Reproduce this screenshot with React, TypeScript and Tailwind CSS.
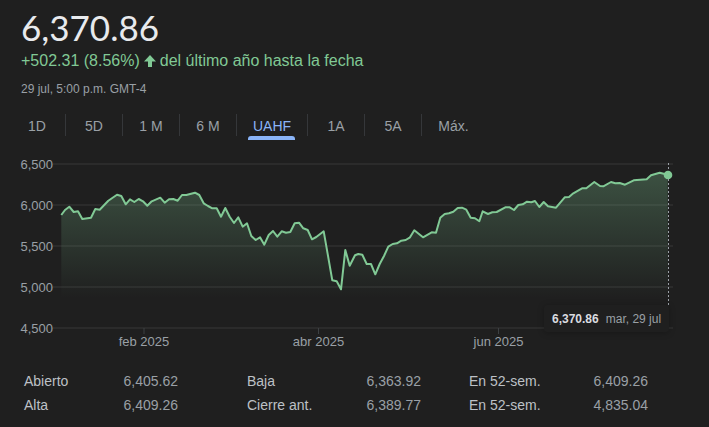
const A = [[184,195],[195,180],[208,170],[221,186],[234,184],[247,207],[273,203],[286,177],[299,179],[325,152],[351,134],[364,138],[377,163],[390,148],[403,156],[416,147],[429,154],[442,167],[455,154],[481,143],[494,158],[507,148],[520,147],[533,152],[546,135],[559,135],[585,128],[598,135],[611,160],[624,168],[637,175],[650,175],[663,200],[676,174],[689,200],[702,219],[715,202],[728,230],[741,220],[754,258],[767,270],[780,262],[793,284],[806,255],[819,243],[832,260],[845,244],[858,248],[871,246],[884,220],[897,218],[910,235],[923,240],[936,268],[949,261],[971,244],[997,391],[1010,394],[1023,418],[1036,300],[1049,347],[1065,316]];
const B = [[10,312],[22,314],[35,342],[48,342],[61,373],[74,342],[87,318],[100,290],[113,282],[126,280],[139,272],[152,270],[165,262],[178,241],[204,262],[230,247],[243,248],[256,203],[269,192],[282,190],[295,185],[308,174],[321,173],[334,179],[347,203],[360,205],[373,214],[383,184],[399,192],[412,187],[425,186],[451,172],[464,172],[477,180],[490,165],[503,163],[516,155],[529,157],[540,153],[553,171],[566,156],[579,169],[603,173],[629,142],[642,141],[655,130],[681,115],[694,115],[718,96],[735,108],[745,109],[768,96],[781,100],[794,99],[810,104],[836,91],[875,88],[888,76],[914,68],[938,74]];
const pts = [
  ...A.map(([x, y]) => [x / 3, 150 + y / 3]),
  ...B.map(([x, y]) => [355 + x / 3, 150 + y / 3]),
];
const line = pts.map(([x, y]) => `${x.toFixed(1)},${y.toFixed(1)}`).join(" ");
const area = `${line} 668,328 61.3,328`;

const tabs = ["1D", "5D", "1 M", "6 M", "UAHF", "1A", "5A", "Máx."];
const stats = [
  ["Abierto", "6,405.62", "Baja", "6,363.92", "En 52-sem.", "6,409.26"],
  ["Alta", "6,409.26", "Cierre ant.", "6,389.77", "En 52-sem.", "4,835.04"],
];
const yLabels = [["6,500", 164], ["6,000", 205], ["5,500", 246], ["5,000", 287], ["4,500", 328]] as const;
const xLabels = [["feb 2025", 144], ["abr 2025", 318.5], ["jun 2025", 498.5]] as const;

export default function App() {
  return (
    <div className="w-[709px] h-[427px] overflow-hidden bg-[#1f1f1f] font-['Liberation_Sans',Arial,sans-serif]">
      <div className="pl-[21px] pt-[7px]">
        <div className="font-['Lato',sans-serif] text-[35px] leading-[41px] text-[#e8eaed]">6,370.86</div>
        <div className="flex items-center h-[24px] mt-[1px] text-[16px] text-[#81c995]">
          <span>+502.31 (8.56%)</span>
          <svg width="14" height="14" viewBox="0 0 14 14" className="mx-[3px]" fill="#81c995">
            <path d="M7 1 13 7.4H9V13H5V7.4H1Z" />
          </svg>
          <span>del último año hasta la fecha</span>
        </div>
        <div className="mt-[8px] text-[12px] leading-[16px] text-[#9aa0a6]">29 jul, 5:00 p.m. GMT-4</div>
      </div>
      <div className="flex pl-[9px] mt-[17px] h-[37px]">
        {tabs.map((t, i) => {
          const active = t === "UAHF";
          const last = i === tabs.length - 1;
          return (
            <div
              key={t}
              className={`relative flex items-start justify-center pt-[2px] h-[22px] text-[14px] leading-[20px] ${active ? "w-[71px] text-[#8ab4f8]" : last ? "w-[63px] text-[#9aa0a6]" : "w-[57px] text-[#9aa0a6]"} ${!last ? "border-r border-[#35373a]" : ""}`}
            >
              {t}
              {active && <div className="absolute left-[11px] right-[12px] top-[22px] h-[4px] rounded-t-[3px] bg-[#8ab4f8]" />}
            </div>
          );
        })}
      </div>
      <div className="relative h-[200px] mt-[-1px]">
        <svg width="709" height="200" viewBox="0 150 709 200" className="block">
          <defs>
            <linearGradient id="fill" x1="0" y1="170" x2="0" y2="298" gradientUnits="userSpaceOnUse">
              <stop offset="0" stopColor="#81c995" stopOpacity="0.3" />
              <stop offset="1" stopColor="#81c995" stopOpacity="0" />
            </linearGradient>
          </defs>
          {yLabels.map(([l, y]) => (
            <g key={l}>
              <line x1="53" x2="673" y1={y} y2={y} stroke="#303131" strokeWidth="1.5" />
              <text x="53" y={y + 4.5} textAnchor="end" fontSize="13" fill="#9aa0a6" fontFamily="Liberation Sans">{l}</text>
            </g>
          ))}
          {xLabels.map(([l, x]) => (
            <g key={l}>
              <line x1={x} x2={x} y1="328" y2="334" stroke="#3c4043" strokeWidth="1" />
              <text x={x} y="346" textAnchor="middle" fontSize="13" fill="#9aa0a6" fontFamily="Liberation Sans">{l}</text>
            </g>
          ))}
          <polygon points={area} fill="url(#fill)" />
          <polyline points={line} fill="none" stroke="#81c995" strokeWidth="2" strokeLinejoin="round" />
          <line x1="668.5" x2="668.5" y1="163" y2="305" stroke="#9aa0a6" strokeWidth="1" strokeDasharray="2 2" />
          <circle cx="668" cy="175" r="4.3" fill="#81c995" />
        </svg>
        <div className="absolute left-[544px] top-[155px] w-[125px] h-[27px] rounded-[3px] bg-[#1f1f1f] shadow-[0_1px_6px_rgba(0,0,0,0.25)] flex items-center pl-[8px] text-[12px] whitespace-nowrap">
          <span className="font-bold text-[#dadce0]">6,370.86</span>
          <span className="ml-[7px] text-[#9aa0a6]">mar, 29 jul</span>
        </div>
      </div>
      <div className="mt-[19px]">
        {stats.map((r) => (
          <div key={r[0]} className="flex h-[24px] items-center text-[14px]">
            <div className="w-[24px]" />
            <span className="w-[80px] text-[#bdc1c6]">{r[0]}</span>
            <span className="w-[74px] text-right text-[#9aa0a6]">{r[1]}</span>
            <div className="w-[69px]" />
            <span className="w-[100px] text-[#bdc1c6]">{r[2]}</span>
            <span className="w-[74px] text-right text-[#9aa0a6]">{r[3]}</span>
            <div className="w-[48px]" />
            <span className="w-[100px] text-[#bdc1c6]">{r[4]}</span>
            <span className="w-[79px] text-right text-[#9aa0a6]">{r[5]}</span>
          </div>
        ))}
      </div>
    </div>
  );
}
